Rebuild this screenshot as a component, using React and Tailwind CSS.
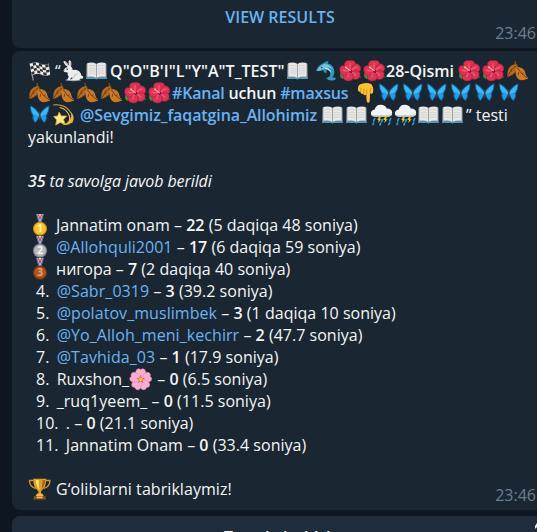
import React from 'react';

const Svg = ({ children }) => (
  <svg viewBox="0.3 0 24 22" width="24" height="22" className="block h-[22px] w-6 shrink-0 overflow-visible">{children}</svg>
);

const Flag = () => (
  <Svg>
    <path d="M2.500 3 L5.500 20.500" stroke="#9a9a96" strokeWidth="1.200" />
    <path d="M2 4 Q8 1 12 3.500 Q17 6 21 3.500 L22.500 14.500 Q18 17 13.500 14.500 Q9 12.500 4 15.500Z" fill="#eee" />
    <path d="M5 3l3-.8.4 2.700-3 .8zM11 3l3.200 1.500.4 2.700-3.200-1.400zM17.500 5l3.200-1 .4 2.700-3.200 1zM2.500 6.800l3-1.100.5 2.700-3 1.200zM8.400 5l3.200.800.4 2.600-3.200-.6zM14.600 7.200l3.300.5.400 2.500-3.300-.3zM6 8.400l2.900-.7.400 2.500-2.800.8zM12 8.400l3 1.500.4 2.300-3-1.300zM18.300 10.200l3.200-.7.4 2.400-3.200.9zM3.500 12.200l3-1.100.4 2.400-2.900 1.400zM9.300 10.200l3.100.7.400 2.500-3.100-.5zM15.400 12.200l3.300.6.400 2.600-3.300-.2z" fill="#30312f" />
  </Svg>
);

const Rabbit = () => (
  <Svg>
    <ellipse cx="11.500" cy="20" rx="8" ry="1.200" fill="#969a9e" />
    <path d="M6 7 Q1 3 2 1 Q4 .2 7.500 6 Q6 1 8 .3 Q10.500 1.500 9.300 6.400 Q11 8 11 10 Q18 8.500 20 16 Q22 15.500 21.500 18 Q20.500 19 19 18.500 Q18 20.500 14 20.200 L9 20.200 Q10 18.500 11.500 18 L9.500 17.500 L8 20.300 L5.500 20 L7 16.500 Q5.500 15 6 12.500 Q1.500 12.500 2 10.300 Q3 7.500 6 7Z" fill="#eceded" />
    <path d="M3 2.200 Q5 3 6.700 6M8.500 2 Q8.800 4 8.400 6" stroke="#dba8ab" fill="none" />
    <path d="M12 18 Q12.500 13.500 16 14" stroke="#b9bdc0" fill="none" />
    <circle cx="5.500" cy="9.300" r=".8" fill="#27282a" />
    <circle cx="2.500" cy="10.500" r=".6" fill="#cf888d" />
  </Svg>
);

const Book = () => (
  <Svg>
    <g transform="translate(-.5 1) scale(.94 .95)">
      <path d="M1.300 3H22.700L22.900 18.500H1Z" fill="#7b8990" />
      <path d="M1 17H23V18.900H13.500L12 19.600L10.500 18.900H1Z" fill="#4d99b8" />
      <path d="M2.300 2.200Q8 .8 12 3.200Q16 .8 21.700 2.200V16.600Q16 15.500 12 17.800Q8 15.500 2.300 16.600Z" fill="#e9e8e6" />
      <path d="M4 5Q8 4 10.500 5.500M4 8Q8 6.800 10.500 8.500M4 10.500Q8 9.300 10.500 11M4 13Q8 11.800 10.500 13.500M20 5Q16 4 13.500 5.500M20 8Q16 6.800 13.500 8.500M20 10.500Q16 9.300 13.500 11M20 13Q16 11.800 13.500 13.500" stroke="#c5c6c7" strokeWidth=".7" fill="none" />
      <path d="M12 3.200V17.800" stroke="#a0a3a5" strokeWidth="1.200" />
    </g>
  </Svg>
);

const Dolphin = () => (
  <Svg>
    <path d="M1.500 10.500Q3 5.500 8 3.500Q11 .8 14 1L12.800 3.200Q19.500 5 19.700 12Q19.700 15 17.700 17L21 18Q21.500 20 17.500 20.500Q14 21 11.500 18.500Q14 16.500 15 16.500Q17 11 12 9.500L11.500 13.500Q9 13 8.500 10Q5 11.500 1.500 10.500Z" fill="#3496ba" />
    <path d="M3 9.500Q5 5.500 10 4Q16 4.500 18.500 10Q17 7.500 12.500 7.200Q8 9.500 3 9.500Z" fill="#77c5da" />
    <path d="M2 10.500Q6 11 10 8.500Q15 9.500 16.500 13Q16.500 9 11.500 7.500Q8 10 2 10Z" fill="#d9edf0" />
    <circle cx="7" cy="7.500" r=".8" fill="#153347" />
  </Svg>
);

const Hibiscus = () => (
  <Svg>
    <path d="M2 12Q0 18 4.500 19L8 14M17 16L22 18L20 11" fill="#4c8c2e" />
    <g fill="#dc3253" stroke="#a91c39" strokeWidth=".5">
      <path d="M12 11Q5 8.500 5.800 3.500Q7 0 11.500 .6Q17 0 17 4.500Q17 8.500 12 11Z" />
      <path d="M12 11Q13 4 18 3.800Q22.500 4.800 22 9.500Q20.500 14.500 12 11Z" />
      <path d="M12 11Q20 9.500 21.500 13.500Q21.500 19 17 19.500Q11.500 19.500 12 11Z" />
      <path d="M12 11Q16.500 17 12.500 20.500Q6.500 22 4.500 18Q3.500 13 12 11Z" />
      <path d="M12 11Q7 17 2.800 14.500Q0 10.500 1.500 7Q5 2.500 12 11Z" />
    </g>
    <path d="M12 10Q10.500 6 11.500 3M13 10.500Q16 7 19 7M13 12Q16 13 17.500 16M11.500 12Q9 14 9 17.500M11 10.500Q7 11.500 4 10" stroke="#f05578" strokeWidth="1.500" fill="none" />
    <circle cx="12" cy="11.200" r="1.700" fill="#8f0c2d" />
    <path d="M12 11L7.500 7.500" stroke="#ffa79a" strokeWidth="1.200" />
    <circle cx="7.300" cy="7.300" r="1.100" fill="#f5bd58" />
  </Svg>
);

const Leaf = () => (
  <Svg>
    <path d="M9.500 1Q9 5 12 8" stroke="#8a4716" strokeWidth="1.300" fill="none" />
    <path d="M11.500 4.500Q7 3.500 4 7Q1 10 1.800 17Q8 15 10.300 11Q12.500 8 11.500 4.500Z" fill="#b36a20" />
    <path d="M11 7Q17 7 19 11Q19.500 15 22.500 18.500Q14 22.500 11 17Q8.500 12 11 7Z" fill="#cb7a25" />
    <path d="M11 5.500Q5 9 2 16M6 9L5.500 12M11.500 7.500Q15 14 21.500 18M13 12L12.500 15M15.500 13.500L18 13" stroke="#74390f" strokeWidth=".9" fill="none" />
  </Svg>
);

const Butterfly = () => (
  <Svg>
    <path d="M11.800 9.500Q8 3 2.300 1.500Q1.800 7 4.800 11.500Q3.800 14 5.500 16.500L7.300 19.200Q10 17 11.800 12.500ZM12.200 9.500Q16 3 21.700 1.500Q22.200 7 19.200 11.500Q20.200 14 18.500 16.500L16.700 19.200Q14 17 12.200 12.500Z" fill="#1a5790" />
    <path d="M11.400 10.500Q8 4.800 3 2.500Q3.200 8 5.800 11.300L11.300 12.300ZM12.600 10.500Q16 4.800 21 2.500Q20.800 8 18.200 11.300L12.700 12.300Z" fill="#37b8f8" />
    <path d="M11.200 12.300L5.700 11.600Q5 14.500 7.500 18.200Q9.900 16 11.200 12.300ZM12.800 12.300L18.300 11.600Q19 14.500 16.500 18.200Q14.100 16 12.800 12.300Z" fill="#209de9" />
    <path d="M12 8V15.500" stroke="#4b3a38" strokeWidth="1.400" strokeLinecap="round" />
  </Svg>
);

const Dizzy = () => (
  <Svg>
    <path d="M1.500 1Q12-.5 18 7Q23 13 20 19" stroke="#d9a33a" strokeWidth="1.100" fill="none" />
    <path d="M8 3.500Q15 5 17.500 11.500Q19 16 16.500 19" stroke="#f0bf4a" strokeWidth="1.200" fill="none" />
    <path d="M19.500 8Q25 16 18 20Q15 21.500 10.500 20.800Q21 18 19.500 8Z" fill="#ecb543" />
    <path d="M7.500 8L9.500 12L15 12L11.800 15.500L13.500 20.500L8.500 18.500L4 21L5 16L2 12.500L6 12Z" fill="#ffe983" stroke="#e8a930" strokeWidth=".8" strokeLinejoin="round" />
  </Svg>
);

const Hand = () => (
  <Svg>
    <path d="M5 2.500Q11-.3 16.500 2Q19.500 6 18.300 10.500Q17.500 12.500 15.300 11.500L15 19.500Q13.500 22 12 19.500L11.500 12.500Q9.500 14 8.500 12Q6 12.500 5.700 10Q3 9.500 3.200 7Q3 3.500 5 2.500Z" fill="#fcc136" />
    <path d="M5.700 10Q6.500 7 6.200 5.500M8.500 12Q9.400 9 9 7M11.700 13Q12.500 9 11.800 7.500M15.300 11.500Q15 8 16.500 6" stroke="#d48b1c" strokeWidth=".9" fill="none" />
  </Svg>
);

const Cloud = () => (
  <Svg>
    <path d="M5 12.500Q1 12.500 1.200 9Q1.500 6 5 5.500Q6 .8 11 .8Q15.500 .8 17 4.500Q22.500 4.500 22.500 9Q22.300 12.500 18.500 12.500Z" fill="#f1f3f4" />
    <path d="M1.500 10Q5 12 11 10.800Q17 12 22.300 10Q21.500 12.800 18.500 12.800H5Q2 12.500 1.500 10Z" fill="#c5cbd0" />
    <path d="M9.500 12.500L7.500 16H9L8 19L12 15.300H10.300L11.300 12.500ZM15.500 12.500L13.500 16H15.300L14.500 19L18 15.300H16.300L17.300 12.500Z" fill="#eac12d" />
    <path d="M5 14.500L4 17M12.800 15.500L12 17.500M21 14.500L20 17M4 19L3.300 20.500M11 19L10.300 21M20 19L19 20.500" stroke="#2aa4dc" strokeWidth="1.600" strokeLinecap="round" />
  </Svg>
);

const Blossom = () => (
  <Svg>
    <g fill="#f9add0" stroke="#e683ad" strokeWidth=".5">
      {[0, 72, 144, 216, 288].map((a) => (
        <path key={a} transform={`rotate(${a} 12 11.500)`} d="M12 11.500Q5 6 7.800 1.800Q10 -.3 12 1.600Q14 -.3 16.200 1.800Q19 6 12 11.500Z" />
      ))}
    </g>
    {[0, 72, 144, 216, 288].map((a) => (
      <path key={a} transform={`rotate(${a} 12 11.500)`} d="M12 10V7.500" stroke="#df4583" strokeWidth="1" />
    ))}
    <circle cx="12" cy="11.500" r="2.100" fill="#f4ca43" stroke="#d88334" strokeWidth=".7" />
  </Svg>
);

const Medal = ({ n, outer, inner, ink }) => (
  <Svg>
    <path d="M8.800 0H15.800L13.800 7.500H10.800Z" fill="#dde3ee" />
    <path d="M8.800 0L11.300 7.500M15.800 0L13.300 7.500" stroke="#526eaa" strokeWidth="1.200" />
    <path d="M10.600 0L12.300 5L14 0" fill="none" stroke="#c84854" strokeWidth="1.200" />
    <circle cx="12.300" cy="14.700" r="7" fill={outer} />
    <circle cx="12.300" cy="14.500" r="5.800" fill={inner} />
    <text x="12.300" y="18.200" textAnchor="middle" fontSize="10" fontWeight="700" fontFamily="Open Sans, sans-serif" fill={ink}>{n}</text>
  </Svg>
);

const Trophy = () => (
  <Svg>
    <path d="M6 2.500H1.800Q1.500 8.500 8 10.500M18 2.500H22.200Q22.500 8.500 16 10.500" stroke="#d49925" strokeWidth="1.300" fill="none" />
    <path d="M5.500 .8H18.500Q18.500 9 14.500 12L13.300 13.500V16H10.700V13.500L9.500 12Q5.500 9 5.500 .8Z" fill="#dc9f24" />
    <path d="M8 2H11Q10.500 8 12 12Q8.500 9 8 2Z" fill="#ffe175" />
    <path d="M15 2H17.500Q17 8 14 11Z" fill="#a66415" />
    <path d="M9.500 15.500H14.500L16.500 18.500H7.500Z" fill="#f1b64a" />
    <path d="M6.500 18H17.500L18.500 21.500H5.500Z" fill="#8e4819" />
    <path d="M9 18.500H15V20.300H9Z" fill="#efbd58" />
  </Svg>
);

const Line = ({ children }) => <div className="flex h-[22px] items-center whitespace-pre">{children}</div>;
const B = ({ children }) => <span className="font-semibold">{children}</span>;
const L = ({ children }) => <span className="text-[#6ab3f3]">{children}</span>;

const ranks = [
  ['4.  ', '@Sabr_0319', '3', '39.2 soniya', true],
  ['5.  ', '@polatov_muslimbek', '3', '1 daqiqa 10 soniya', true],
  ['6.  ', '@Yo_Alloh_meni_kechirr', '2', '47.7 soniya', true],
  ['7.  ', '@Tavhida_03', '1', '17.9 soniya', true],
  ['8.  ', 'Ruxshon_', '0', '6.5 soniya', false, true],
  ['9.  ', '_ruq1yeem_', '0', '11.5 soniya', false],
  ['10.  ', '.', '0', '21.1 soniya', false],
  ['11.  ', 'Jannatim Onam', '0', '33.4 soniya', false],
];

const medals = [
  ['1', '#d9930f', '#fac62c', '#fff3b5', 'Jannatim onam', '22', '5 daqiqa 48 soniya', false],
  ['2', '#8a8b8d', '#b7b8ba', '#f4f4f4', '@Allohquli2001', '17', '6 daqiqa 59 soniya', true],
  ['3', '#7c3410', '#b0541e', '#e9a071', 'нигора', '7', '2 daqiqa 40 soniya', false],
];

export default function App() {
  return (
    <div className="flex h-[532px] w-[537px] flex-col overflow-hidden bg-[#0e1621] pl-3 font-['Open_Sans','Noto_Sans',sans-serif] text-[16px] leading-[22px] text-[#f5f5f5]">
      <div className="relative h-12 shrink-0 rounded-bl-lg bg-[#1a2733]">
        <div className="pt-[6px] pl-[11px] text-center font-semibold text-[#6ab3f3]"><span className="inline-block w-[111px] whitespace-nowrap">VIEW RESULTS</span></div>
        <div className="absolute top-[22px] right-px text-[#6d7f8f]">23:46</div>
      </div>

      <div className="relative mt-[3px] h-[459px] shrink-0 rounded-l-lg bg-[#1a2733] pt-[9px] pl-4">
        <Line>
          <Flag /><span className="w-[10px] pl-[3px]">“</span><Rabbit /><Book />
          <span className="w-[177px] font-semibold tracking-[0.04px]">Q"O"B'I"L"Y"A"T_TEST"</span><Book />
          <span className="w-[4px]" /><Dolphin /><Hibiscus /><Hibiscus />
          <span className="w-[71px] font-semibold"><span className="-ml-px">28-Qismi</span></span><Hibiscus /><Hibiscus /><Leaf />
        </Line>
        <Line>
          <Leaf /><Leaf /><Leaf /><Leaf /><Hibiscus /><Hibiscus />
          <span className="w-[183px] font-semibold tracking-[-0.19px]"><L>#Kanal</L> uchun <L>#maxsus</L></span>
          <Hand /><span className="-ml-[2px]" /><Butterfly /><Butterfly /><Butterfly /><Butterfly /><Butterfly /><Butterfly />
        </Line>
        <Line>
          <Butterfly /><Dizzy />
          <span className="w-[246px] pl-1 font-semibold tracking-[-0.1px]"><L>@Sevgimiz_faqatgina_Allohimiz</L></span>
          <Book /><Book /><Cloud /><Cloud /><Book /><Book />
          <span>” testi</span>
        </Line>
        <Line>yakunlandi!</Line>
        <Line> </Line>
        <Line><span className="italic tracking-[-0.08px]"><B>35</B> ta savolga javob berildi</span></Line>
        <Line> </Line>
        {medals.map(([n, outer, inner, ink, name, score, time, link]) => (
          <Line key={n}>
            <Medal n={n} outer={outer} inner={inner} ink={ink} />
            <span className="pl-1 tracking-[0.02px]">{link ? <L>{name}</L> : name} – <B>{score}</B> ({time})</span>
          </Line>
        ))}
        {ranks.map(([n, name, score, time, link, flower]) => (
          <Line key={n}>
            <span className="pl-2">{n}<span className="-ml-px tracking-[0.06px]">{link ? <L>{name}</L> : name}</span></span>
            {flower && <Blossom />}
            <span className="tracking-[0.02px]"> – <B>{score}</B> ({time})</span>
          </Line>
        ))}
        <Line> </Line>
        <Line><Trophy /><span className="pl-1 tracking-[0.06px]">Gʻoliblarni tabriklaymiz!</span></Line>
        <div className="absolute right-px bottom-1 text-[#6d7f8f]">23:46</div>
      </div>

      <div className="relative mt-[6px] flex h-[16px] shrink-0 overflow-hidden rounded-tl-lg bg-[#1f2c3a] pt-[10px] pl-[212px] font-semibold whitespace-pre">
        <span className="w-[41px]">T</span>
        <span className="w-[18px]">l</span>
        <span className="w-[21px]">l</span>
        <span className="w-[10px]">l</span>
        <span className="w-[12px]">l</span>
        <span>l</span>
        <svg className="absolute top-[7px] right-0 h-[6px] w-[2px]" viewBox="0 0 2 6"><path d="M0 6V3L2 0V4Z" fill="#e7eaed" /></svg>
      </div>
    </div>
  );
}
